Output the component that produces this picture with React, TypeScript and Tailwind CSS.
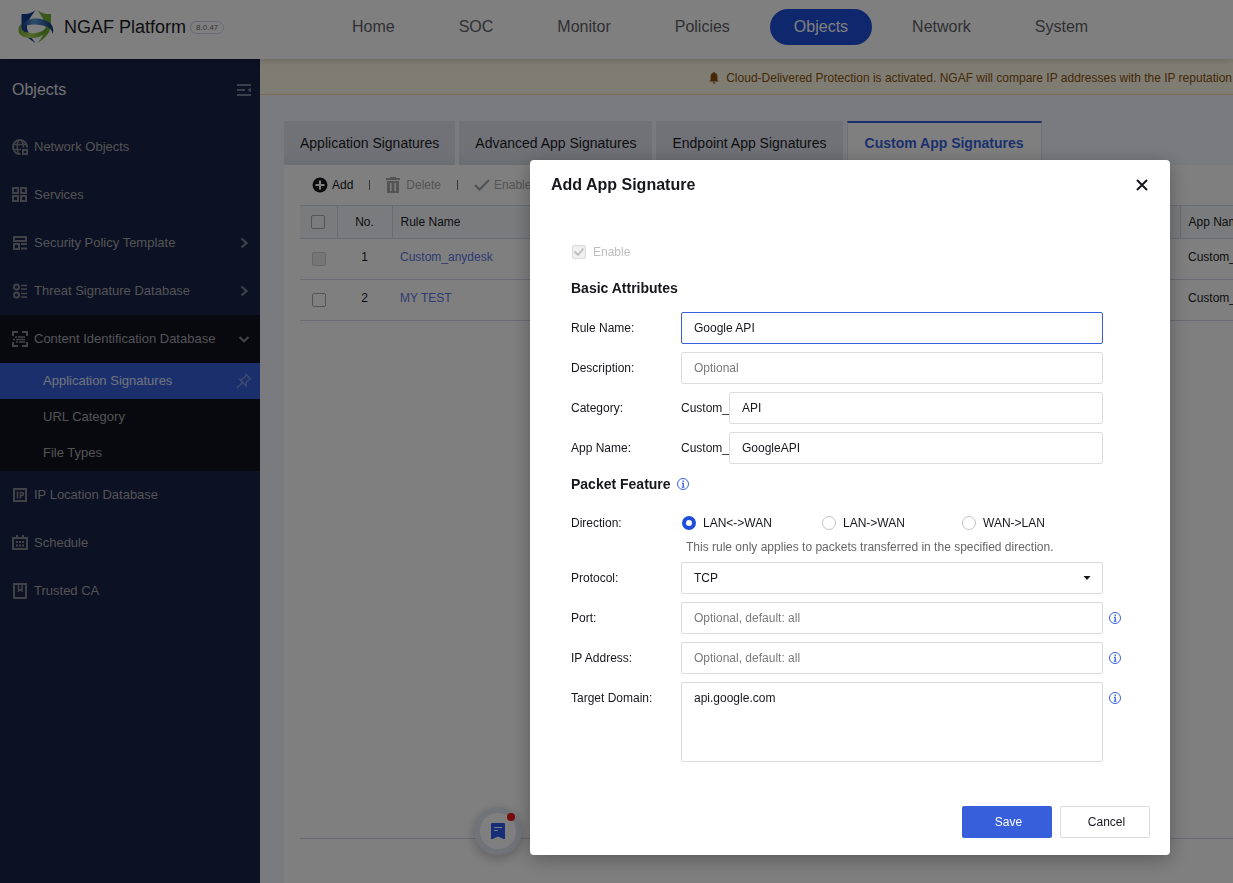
import { useState } from "react";
import type { ReactNode } from "react";

const NAV = ["Home", "SOC", "Monitor", "Policies", "Objects", "Network", "System"];

const TABS = [
  "Application Signatures",
  "Advanced App Signatures",
  "Endpoint App Signatures",
  "Custom App Signatures",
];

const RULES = [
  { no: 1, name: "Custom_anydesk", app: "Custom_", locked: true },
  { no: 2, name: "MY TEST", app: "Custom_", locked: false },
];

const DIRECTIONS = ["LAN<->WAN", "LAN->WAN", "WAN->LAN"];

const SUB_ITEMS = ["Application Signatures", "URL Category", "File Types"];

const Icon = ({ children }: { children: ReactNode }) => (
  <svg
    className="w-4 h-4 shrink-0"
    viewBox="0 0 16 16"
    fill="none"
    stroke="currentColor"
    strokeWidth="2"
    aria-hidden="true"
  >
    {children}
  </svg>
);

const GlobeIcon = () => (
  <Icon>
    <path d="M15 8.5A7 7 0 1 0 8.5 15" />
    <path d="M1 5.5h14M1 10.5h8M7 1C4.5 4 4.5 12 7 15M9 1c2 2 2.500 4.500 2.500 7.500" strokeWidth="1.5" />
    <path d="M11 11h4v4h-4z" />
  </Icon>
);

const GridIcon = () => (
  <Icon>
    <path d="M1 1h5v5H1zM9 1h5v5H9zM1 9h5v5H1zM9 9h5v5H9z" />
  </Icon>
);

const TemplateIcon = () => (
  <Icon>
    <path d="M2 2h12v4H2zM2 9h5v5H2zM9 9h6M9 13.500h6" />
  </Icon>
);

const ThreatIcon = () => (
  <Icon>
    <circle cx="4.500" cy="4" r="2.500" />
    <circle cx="4.500" cy="12" r="2.500" />
    <path d="M9 2.500h6M9 6h6M9 10.500h6M9 14h6" strokeWidth="1.600" />
  </Icon>
);

const ScanIcon = () => (
  <Icon>
    <path d="M1 5V1h5M10 1h5v4M15 11v4h-5M6 15H1v-4" />
    <path d="M3 6h2M6 6h7M1 8.500h2M4 8.500h9M4 11h2M7 11h6" strokeWidth="1.400" />
  </Icon>
);

const IpIcon = () => (
  <Icon>
    <path d="M2 2h12v12H2z" />
    <path d="M5.500 4.500v7M8.500 11.500v-6H10a1.500 1.500 0 0 1 0 3H8.500" strokeWidth="1.600" />
  </Icon>
);

const CalendarIcon = () => (
  <Icon>
    <path d="M1 3h14v11H1zM5 0v3M11 0v3" />
    <path d="M4 7h2M7 7h2M10 7h2M4 10.500h2M7 10.500h2M10 10.500h2" strokeWidth="1.800" />
  </Icon>
);

const BookIcon = () => (
  <Icon>
    <path d="M2 1h12v14H2z" />
    <path d="M6.500 2v6l1.800-1.300L10 8V2" strokeWidth="1.600" />
  </Icon>
);

const Chevron = ({ open }: { open: boolean }) => (
  <svg className="w-3 h-3 text-[#83858f]" viewBox="0 0 12 12" fill="none" stroke="currentColor" strokeWidth="2.200" aria-hidden="true">
    <path d={open ? "M1.500 4 6 8.300 10.500 4" : "M3.500 1.500 8.500 6 3.500 10.500"} />
  </svg>
);

const InfoIcon = () => (
  <svg className="w-3 h-3 shrink-0 text-[#375fdb]" viewBox="0 0 12 12" fill="none" stroke="currentColor" aria-hidden="true">
    <circle cx="6" cy="6" r="5.500" />
    <path d="M6.200 2.500V4M5 5.300h1.200v4M4.800 9.200h2.600" strokeWidth="1.300" />
  </svg>
);

const Logo = () => (
  <svg className="w-9 h-9" viewBox="0 0 36 36" aria-hidden="true">
    <defs>
      <linearGradient id="logoBlue" x1="0" x2="1">
        <stop offset="0" stopColor="#12388c" />
        <stop offset=".4" stopColor="#5c9fd8" />
        <stop offset="1" stopColor="#12307c" />
      </linearGradient>
      <linearGradient id="logoGreen" x1="0" x2="1">
        <stop offset="0" stopColor="#7fb236" />
        <stop offset=".4" stopColor="#a6d353" />
        <stop offset="1" stopColor="#5c9a26" />
      </linearGradient>
    </defs>
    <path d="M17.500 1C13 4.500 8 5.500 3.500 5v12c1 6 4 11 14 17-4-5-7-9-8.500-14-.5-3 .5-7 3-11z" fill="#143c94" />
    <path d="M19.500 1c4 3.500 9 4.500 13.500 4v12c-1 6-4 11-13.500 17 4-5 7-9 8-14 .5-3-1-8-3.500-12z" fill="#72b02f" />
    <path d="M3 15c-4 4-3.500 11 3 13 8 2.500 17 1 22-5l1-5c-4 5-11 7-17 6-6-1-9-4-9-9z" fill="url(#logoGreen)" />
    <path d="M3.500 16C7 10 17 8 25 10.500c8 2 12 8 9.500 14.500-.5-5-4-7.500-10-8.500-7-1.500-13-1-17 .5-1 3-.5 6 1 8-4-3-6-6-5-9z" fill="url(#logoBlue)" />
  </svg>
);

function Sidebar() {
  return (
    <aside className="w-[260px] shrink-0 bg-[#182247] text-[#a6a7ac] text-[13px]">
      <div className="h-16 pl-3 pr-2 pb-[2px] flex items-center justify-between">
        <h1 className="text-base text-[#e2e3e7]">Objects</h1>
        <button type="button" aria-label="Collapse menu">
          <svg className="w-4 h-4 text-[#7b8096]" viewBox="0 0 16 16" fill="none" stroke="currentColor" strokeWidth="2" aria-hidden="true">
            <path d="M1 3h14M1 8h8M1 13h14" />
            <path d="M15 5.500v5L11.500 8z" fill="currentColor" stroke="none" />
          </svg>
        </button>
      </div>
      <nav>
        <SideItem icon={<GlobeIcon />} label="Network Objects" />
        <SideItem icon={<GridIcon />} label="Services" />
        <SideItem icon={<TemplateIcon />} label="Security Policy Template" expandable />
        <SideItem icon={<ThreatIcon />} label="Threat Signature Database" expandable />
        <div className="bg-[#10121f]">
          <SideItem icon={<ScanIcon />} label="Content Identification Database" expandable open />
          {SUB_ITEMS.map((item, i) => (
            <a
              key={item}
              href="#"
              className={
                i === 0
                  ? "h-9 pl-[43px] pr-2 flex items-center justify-between bg-[#375fdb] text-[#dfe5f8]"
                  : "h-9 pl-[43px] pr-2 flex items-center justify-between"
              }
            >
              {item}
              {i === 0 ? (
                <svg className="w-4 h-4 text-[#7f98e4]" viewBox="0 0 16 16" fill="none" stroke="currentColor" strokeWidth="1.300" aria-hidden="true">
                  <path d="M10 1.500 14.500 6 13 6.500l-3 3 .2 3.500L3.500 6.300l3.200-.1 2.800-3zM6.500 9.500 1 15" />
                </svg>
              ) : null}
            </a>
          ))}
        </div>
        <SideItem icon={<IpIcon />} label="IP Location Database" />
        <SideItem icon={<CalendarIcon />} label="Schedule" />
        <SideItem icon={<BookIcon />} label="Trusted CA" />
      </nav>
    </aside>
  );
}

function SideItem({
  icon,
  label,
  expandable,
  open,
}: {
  icon: ReactNode;
  label: string;
  expandable?: boolean;
  open?: boolean;
}) {
  return (
    <a href="#" className="h-12 pl-3 pr-[10px] flex items-center">
      <span className="text-[#83858f]">{icon}</span>
      <span className="ml-[6px] flex-1">{label}</span>
      {expandable ? <Chevron open={!!open} /> : null}
    </a>
  );
}

function Header() {
  return (
    <header className="relative h-[59px] shrink-0 bg-white flex items-start shadow-[0_2px_6px_rgba(0,0,0,0.15)] whitespace-nowrap">
      <div className="w-[328px] h-[54px] pl-[18px] shrink-0 flex items-center">
        <Logo />
        <span className="ml-[10px] text-lg text-[#1b1b1f]">NGAF Platform</span>
        <span className="ml-1 px-[5px] h-[13px] leading-[11px] text-[8px] rounded-full border border-[#cfd3e2] text-[#6c6e75]">
          8.0.47
        </span>
      </div>
      <nav className="pt-[9px] flex gap-4">
        {NAV.map((item) => (
          <a
            key={item}
            href="#"
            className={
              item === "Objects"
                ? "h-9 px-6 leading-9 text-base rounded-full bg-[#1f4edb] text-white"
                : "h-9 px-6 leading-9 text-base text-[#5f6168]"
            }
          >
            {item}
          </a>
        ))}
      </nav>
    </header>
  );
}

function Toolbar() {
  return (
    <div className="h-10 pl-3 flex items-center text-[#a9a9a9]">
      <button type="button" className="flex items-center gap-1 text-[#16171c]">
        <svg className="w-4 h-4" viewBox="0 0 16 16" aria-hidden="true">
          <circle cx="8" cy="8" r="7.500" fill="currentColor" />
          <path d="M8 3.500v9M3.500 8h9" stroke="#fff" strokeWidth="2" />
        </svg>
        Add
      </button>
      <span className="w-px h-[10px] mx-4 bg-[#6c6c70]" />
      <button type="button" disabled className="flex items-center gap-[6px]">
        <svg className="w-[14px] h-4" viewBox="0 0 14 16" fill="currentColor" aria-hidden="true">
          <path d="M0 1h4V0h6v1h4v2H0zM1 4h12v12H1zM4 6v8h1.500V6zM8.500 6v8H10V6z" fillRule="evenodd" />
        </svg>
        Delete
      </button>
      <span className="w-px h-[10px] mx-4 bg-[#6c6c70]" />
      <button type="button" disabled className="flex items-center gap-1">
        <svg className="w-4 h-4" viewBox="0 0 16 16" fill="none" stroke="currentColor" strokeWidth="2.400" aria-hidden="true">
          <path d="M1 8l4.500 4.500L15 3" />
        </svg>
        Enable
      </button>
    </div>
  );
}

const CHECKBOX =
  "block w-[14px] h-[14px] mx-auto appearance-none rounded-xs border border-[#a8a9ae] disabled:bg-[#ececec] disabled:border-[#d0d0d2]";

function RuleTable() {
  return (
    <table className="w-full table-fixed border-collapse text-left">
      <colgroup>
        <col className="w-[37px]" />
        <col className="w-[55px]" />
        <col />
        <col className="w-[53px]" />
      </colgroup>
      <thead>
        <tr className="h-[33px] bg-[#f4f6fb] border-y border-[#d5d8e6]">
          <th className="p-0 border-r border-[#d5d8e6]">
            <input type="checkbox" aria-label="Select all rules" className={CHECKBOX} />
          </th>
          <th className="p-0 border-r border-[#d5d8e6] font-normal text-center">No.</th>
          <th className="py-0 px-2 font-normal">Rule Name</th>
          <th className="py-0 pl-2 pr-0 border-l border-[#d5d8e6] font-normal whitespace-nowrap">App Name</th>
        </tr>
      </thead>
      <tbody>
        {RULES.map((rule) => (
          <tr key={rule.no} className="h-[41px] border-b border-[#d5d8e6]">
            <td className="p-0">
              <input
                type="checkbox"
                aria-label={"Select " + rule.name}
                disabled={rule.locked}
                className={CHECKBOX}
              />
            </td>
            <td className="p-0 pb-1 text-center">{rule.no}</td>
            <td className="px-2 pt-0 pb-1">
              <a href="#" className="text-[#6076e6]">
                {rule.name}
              </a>
            </td>
            <td className="pl-2 pr-0 pt-0 pb-1">{rule.app}</td>
          </tr>
        ))}
      </tbody>
    </table>
  );
}

function Content() {
  return (
    <main className="flex-1 min-w-0 flex flex-col overflow-hidden bg-[#f3f6fd]">
      <div className="h-9 shrink-0 pt-[2px] pr-px flex items-center justify-end gap-[6px] bg-[#fff9e8] border-b border-[#f5d9a4] text-xs text-[#8a5208] whitespace-nowrap">
        <svg className="w-3 h-3" viewBox="0 0 12 12" fill="currentColor" aria-hidden="true">
          <path d="M6 0a1 1 0 0 1 1 1 3.400 3.400 0 0 1 2.400 3.500V8l1.200 1.500H1.400L2.600 8V4.500A3.400 3.400 0 0 1 5 1a1 1 0 0 1 1-1zM4.500 10.200h3L6 12z" />
        </svg>
        <p>Cloud-Delivered Protection is activated. NGAF will compare IP addresses with the IP reputation</p>
      </div>
      <div className="flex-1 pl-6 pt-[26px] flex flex-col">
        <div role="tablist" className="h-11 flex gap-1 text-sm whitespace-nowrap">
          {TABS.map((tab, i) => (
            <button
              key={tab}
              type="button"
              role="tab"
              aria-selected={i === 3}
              className={
                i === 3
                  ? "px-[17px] pb-[2px] border-x border-t-2 border-x-[#e2e5ee] border-t-[#375fdb] bg-white font-bold text-[#375fdb]"
                  : "px-4 bg-linear-to-b from-[#e2e5f0] from-60% to-[#d9dce6] text-[#1b1b1f]"
              }
            >
              {tab}
            </button>
          ))}
        </div>
        <section className="flex-1 pl-4 flex flex-col bg-white text-xs text-[#1b1b1f]">
          <Toolbar />
          <div className="flex-1 border-b border-[#d5d8e6]">
            <RuleTable />
          </div>
          <div className="h-11" />
        </section>
      </div>
    </main>
  );
}

const FIELD =
  "block w-full h-8 px-3 border border-[#dcdcdc] rounded-xs bg-white text-[#16171c] placeholder:text-[#7a7a7a] outline-none focus:border-[#375fdb]";

function Row({
  id,
  label,
  prefix,
  info,
  children,
}: {
  id: string;
  label: string;
  prefix?: string;
  info?: boolean;
  children: ReactNode;
}) {
  return (
    <div className="flex">
      <label htmlFor={id} className="w-[110px] shrink-0 leading-8">
        {label}
      </label>
      {prefix ? <span className="w-12 shrink-0 leading-8">{prefix}</span> : null}
      <div className="flex-1 min-w-0">{children}</div>
      <div className="w-[47px] h-8 pl-[6px] shrink-0 flex items-center">{info ? <InfoIcon /> : null}</div>
    </div>
  );
}

function SignatureDialog() {
  const [direction, setDirection] = useState(DIRECTIONS[0]);

  return (
    <form
      role="dialog"
      aria-labelledby="dialog-title"
      onSubmit={(e) => e.preventDefault()}
      className="w-[640px] bg-white rounded shadow-[0_4px_20px_rgba(0,0,0,0.3)] text-xs text-[#16171c]"
    >
      <div className="h-[50px] pl-[21px] pr-5 flex items-center justify-between">
        <h2 id="dialog-title" className="text-base font-bold">
          Add App Signature
        </h2>
        <button type="button" aria-label="Close" className="w-4 h-4">
          <svg className="w-4 h-4" viewBox="0 0 16 16" stroke="currentColor" strokeWidth="2" aria-hidden="true">
            <path d="M3 3l10 10M13 3 3 13" />
          </svg>
        </button>
      </div>
      <div className="pt-[30px] pl-[41px] pr-5">
        <label className="h-6 flex items-center gap-[6px] text-[#bdbdbd]">
          <span className="relative w-4 h-4 flex items-center justify-center">
            <input type="checkbox" disabled defaultChecked className="w-[14px] h-[14px] appearance-none rounded-xs border border-[#dadada] bg-[#f0f0f0]" />
            <svg className="absolute w-[10px] h-[10px]" viewBox="0 0 10 10" fill="none" stroke="currentColor" strokeWidth="1.800" aria-hidden="true">
              <path d="M.5 4.500 4 8 9.500 1.500" />
            </svg>
          </span>
          Enable
        </label>
        <h3 className="h-12 leading-[48px] text-sm font-bold">Basic Attributes</h3>
        <div className="flex flex-col gap-2">
          <Row id="rule-name" label="Rule Name:">
            <input
              id="rule-name"
              type="text"
              defaultValue="Google API"
              className="block w-full h-8 px-3 border border-[#375fdb] rounded-xs bg-white outline-none"
            />
          </Row>
          <Row id="description" label="Description:">
            <input id="description" type="text" placeholder="Optional" className={FIELD} />
          </Row>
          <Row id="category" label="Category:" prefix="Custom_">
            <input id="category" type="text" defaultValue="API" className={FIELD} />
          </Row>
          <Row id="app-name" label="App Name:" prefix="Custom_">
            <input id="app-name" type="text" defaultValue="GoogleAPI" className={FIELD} />
          </Row>
        </div>
        <h3 className="h-10 flex items-center gap-[6px] text-sm font-bold">
          Packet Feature <InfoIcon />
        </h3>
        <div role="radiogroup" aria-labelledby="direction-label" className="h-[58px] pt-[3px] flex">
          <span id="direction-label" className="w-[110px] shrink-0 leading-8">
            Direction:
          </span>
          <div>
            <div className="h-8 pl-px flex items-center">
              {DIRECTIONS.map((item) => (
                <label key={item} className="w-[140px] flex items-center gap-[7px]">
                  <input
                    type="radio"
                    name="direction"
                    checked={direction === item}
                    onChange={() => setDirection(item)}
                    className="w-[14px] h-[14px] appearance-none rounded-full border border-[#c4c4c4] bg-white checked:border-4 checked:border-[#1f4edb]"
                  />
                  {item}
                </label>
              ))}
            </div>
            <p className="pl-[5px] leading-4 text-[#666]">
              This rule only applies to packets transferred in the specified direction.
            </p>
          </div>
        </div>
        <div className="flex flex-col gap-2">
          <Row id="protocol" label="Protocol:">
            <div className="relative">
              <select id="protocol" defaultValue="TCP" className={FIELD + " appearance-none"}>
                <option>TCP</option>
                <option>UDP</option>
                <option>ICMP</option>
              </select>
              <svg className="absolute right-3 top-[14px] w-2 h-1 pointer-events-none" viewBox="0 0 8 4" aria-hidden="true">
                <path d="M.5 0h7L4 4z" fill="currentColor" />
              </svg>
            </div>
          </Row>
          <Row id="port" label="Port:" info>
            <input id="port" type="text" placeholder="Optional, default: all" className={FIELD} />
          </Row>
          <Row id="ip-address" label="IP Address:" info>
            <input id="ip-address" type="text" placeholder="Optional, default: all" className={FIELD} />
          </Row>
          <Row id="target-domain" label="Target Domain:" info>
            <textarea
              id="target-domain"
              defaultValue="api.google.com"
              className="block w-full h-20 px-3 py-[7px] leading-4 resize-none border border-[#dcdcdc] rounded-xs bg-white outline-none focus:border-[#375fdb]"
            />
          </Row>
        </div>
      </div>
      <div className="pt-11 pb-[17px] pr-5 flex justify-end gap-2">
        <button type="submit" className="w-[90px] h-8 pl-[3px] rounded-xs bg-[#375fdb] text-white">
          Save
        </button>
        <button type="button" className="w-[90px] h-8 pl-[3px] rounded-xs border border-[#dcdcdc]">
          Cancel
        </button>
      </div>
    </form>
  );
}

export default function App() {
  return (
    <div className="relative h-screen flex flex-col overflow-hidden font-['Liberation_Sans',Arial,sans-serif]">
      <Header />
      <div className="flex-1 min-h-0 flex">
        <Sidebar />
        <Content />
      </div>
      <button
        type="button"
        aria-label="Bookmarks"
        className="absolute left-[474px] bottom-7 w-12 h-12 rounded-full border-6 border-[#e1e8f3] bg-white shadow-[0_4px_12px_rgba(0,0,0,0.25)] flex items-center justify-center"
      >
        <svg className="w-[14px] h-4" viewBox="0 0 14 16" aria-hidden="true">
          <path d="M1 0h12a1 1 0 0 1 1 1v15h-1.500L7 13.500 1.500 16H0V1a1 1 0 0 1 1-1z" fill="#2d5bef" />
          <path d="M3 4.500h8M3 7.500h4" stroke="#fff" />
        </svg>
        <span className="absolute right-px top-0 w-2 h-2 rounded-full bg-[#f01414]" />
      </button>
      <div className="fixed inset-0 pt-40 pr-[63px] flex justify-end items-start bg-black/50">
        <SignatureDialog />
      </div>
    </div>
  );
}
